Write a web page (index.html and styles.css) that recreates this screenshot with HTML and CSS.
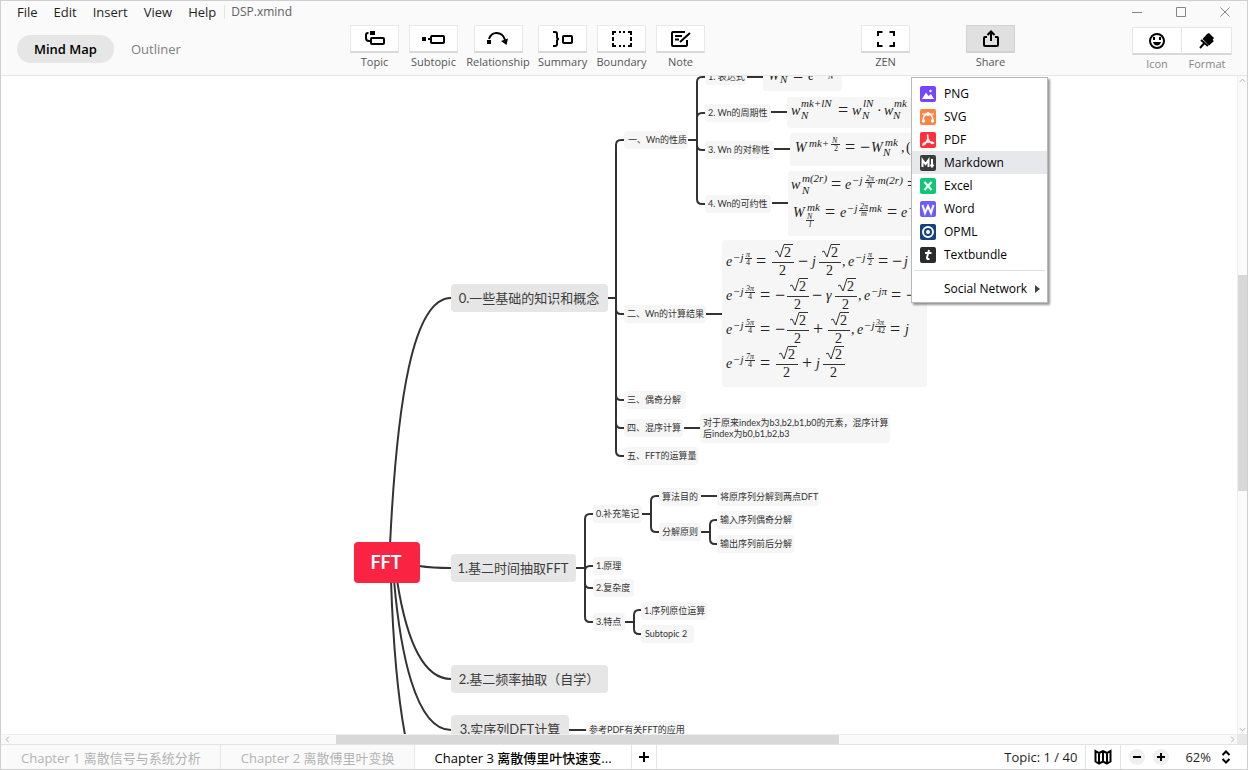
FILE: index.html
```html
<!DOCTYPE html>
<html lang="en">
<head>
<meta charset="utf-8">
<title>DSP.xmind</title>
<link rel="stylesheet" href="styles.css">
</head>
<body>
<div class="app">
  <header class="header">
    <div class="header-left">
      <nav class="menubar" aria-label="Main menu">
        <button class="menu">File</button>
        <button class="menu">Edit</button>
        <button class="menu">Insert</button>
        <button class="menu">View</button>
        <button class="menu">Help</button>
        <span class="filename">DSP.xmind</span>
      </nav>
      <div class="views">
        <button class="view view-active">Mind Map</button>
        <button class="view">Outliner</button>
      </div>
    </div>
    <div class="tools">
      <div class="tool">
        <button class="tool-button" aria-labelledby="l-topic"><svg width="22" height="18" viewBox="0 0 22 18"><path class="ln" d="M4.500 3H4Q2 3 2 5V8Q2 11 5 11H7"/><rect class="ln" x="7" y="8" width="13" height="6" rx="1"/><rect x="6" y="1" width="5" height="4"/></svg></button>
        <span class="tool-label" id="l-topic">Topic</span>
      </div>
      <div class="tool">
        <button class="tool-button" aria-labelledby="l-sub"><svg width="24" height="18" viewBox="0 0 24 18"><rect x="0" y="7" width="4" height="4"/><path class="ln" d="M6 9H9"/><rect class="ln" x="9" y="6" width="13" height="7" rx="1"/></svg></button>
        <span class="tool-label" id="l-sub">Subtopic</span>
      </div>
      <div class="tool tool-wide">
        <button class="tool-button" aria-labelledby="l-rel"><svg width="24" height="18" viewBox="0 0 24 18"><rect x="1" y="10" width="4" height="4"/><path class="ln" d="M3 9Q5 3 10.500 3Q17 3 19 10"/><path d="M15 11L22 8.500L20.500 15Z"/></svg></button>
        <span class="tool-label" id="l-rel">Relationship</span>
      </div>
      <div class="tool">
        <button class="tool-button" aria-labelledby="l-sum"><svg width="22" height="18" viewBox="0 0 22 18"><path class="ln" d="M1 2H3Q5 2 5 4V7Q5 9 7 9Q5 9 5 11V14Q5 16 3 16H1"/><rect class="ln" x="11" y="6" width="9" height="7" rx="1"/></svg></button>
        <span class="tool-label" id="l-sum">Summary</span>
      </div>
      <div class="tool">
        <button class="tool-button" aria-labelledby="l-bound"><svg width="22" height="18" viewBox="0 0 22 18"><path class="ln" d="M2 5V2H5M8 2H10M12 2H14M17 2H20V5M20 7V11M20 13V16H17M14 16H12M10 16H8M5 16H2V13M2 11V7"/></svg></button>
        <span class="tool-label" id="l-bound">Boundary</span>
      </div>
      <div class="tool">
        <button class="tool-button" aria-labelledby="l-note"><svg width="22" height="18" viewBox="0 0 22 18"><path class="ln" d="M15 2H3Q2 2 2 3V15Q2 16 3 16H16Q17 16 17 15V10M5 6H12M5 9.500H9M10 12L20 3"/></svg></button>
        <span class="tool-label" id="l-note">Note</span>
      </div>
      <div class="tool tool-zen">
        <button class="tool-button" aria-labelledby="l-zen"><svg width="22" height="18" viewBox="0 0 22 18"><path class="ln" d="M3 6V2H7.500M14.500 2H19V6M19 12V16H14.500M7.500 16H3V12"/></svg></button>
        <span class="tool-label" id="l-zen">ZEN</span>
      </div>
      <div class="tool tool-share">
        <button class="tool-button pressed" aria-labelledby="l-share" aria-expanded="true"><svg width="20" height="18" viewBox="0 0 20 18"><path class="ln" d="M6 7H4Q3 7 3 8V15Q3 16 4 16H16Q17 16 17 15V8Q17 7 16 7H14M10 11V2M6.500 5L10 1.500L13.500 5"/></svg></button>
        <span class="tool-label" id="l-share">Share</span>
        <div class="dropdown" role="menu">
          <button class="option" role="menuitem"><svg class="badge purple" viewBox="0 0 16 16"><path d="M2 13L6 6.500L8.500 10L11 8L14 13Z"/><circle cx="10.500" cy="5" r="1.200"/></svg>PNG</button>
          <button class="option" role="menuitem"><svg class="badge orange" viewBox="0 0 16 16"><path class="arc" d="M3 11.500Q3.500 5 8 5T13 11.500"/><path class="thin" d="M2 5H14"/><circle cx="8" cy="5" r="2"/><circle cx="3.500" cy="12" r="1.700"/><circle cx="12.500" cy="12" r="1.700"/></svg>SVG</button>
          <button class="option" role="menuitem"><svg class="badge red" viewBox="0 0 16 16"><path class="arc" d="M7.500 2.500Q8.500 7 7 9Q5 13 3 13Q2.500 11 7 10Q12 9 13.500 11Q12 12.500 9.500 9.500Q7 6 7.500 2.500Z"/></svg>PDF</button>
          <button class="option option-hover" role="menuitem"><svg class="badge dark" viewBox="0 0 16 16"><path class="mid" d="M2.500 12V5L5.500 9L8.500 5V12M12 4V11M10.500 9.500L12 11.500L13.500 9.500"/></svg>Markdown</button>
          <button class="option" role="menuitem"><svg class="badge green" viewBox="0 0 16 16"><path class="mid" d="M4.500 4L11.500 12M11.500 4L4.500 12"/></svg>Excel</button>
          <button class="option" role="menuitem"><svg class="badge violet" viewBox="0 0 16 16"><path class="mid" d="M2.500 4L5 12L8 5L11 12L13.500 4"/></svg>Word</button>
          <button class="option" role="menuitem"><svg class="badge navy" viewBox="0 0 16 16"><circle class="mid" cx="8" cy="8" r="5"/><circle cx="8" cy="8" r="2"/></svg>OPML</button>
          <button class="option" role="menuitem"><svg class="badge black" viewBox="0 0 16 16"><path class="mid" d="M9 3L7 10.500Q6.500 12.500 9.500 12M5 6H11.500"/></svg>Textbundle</button>
          <hr class="rule">
          <button class="option option-sub" role="menuitem">Social Network<svg class="more" viewBox="0 0 5 8"><path d="M0 0L5 4L0 8Z"/></svg></button>
        </div>
      </div>
    </div>
    <div class="header-right">
      <div class="window-controls">
        <button class="wc" aria-label="Minimize"><svg viewBox="0 0 12 12"><path d="M1 6.500H11"/></svg></button>
        <button class="wc" aria-label="Maximize"><svg viewBox="0 0 12 12"><path d="M1.500 1.500H10.500V10.500H1.500Z"/></svg></button>
        <button class="wc" aria-label="Close"><svg viewBox="0 0 12 12"><path d="M1.500 1.500L10.500 10.500M10.500 1.500L1.500 10.500"/></svg></button>
      </div>
      <div class="panels">
        <div class="panel">
          <button class="panel-button" aria-labelledby="l-icon"><svg width="18" height="18" viewBox="0 0 18 18"><circle class="ln" cx="9" cy="9" r="7"/><rect x="5" y="5" width="2" height="3"/><rect x="11" y="5" width="2" height="3"/><path d="M5 10H13Q12 13.500 9 13.500T5 10Z"/></svg></button>
          <span class="panel-label" id="l-icon">Icon</span>
        </div>
        <div class="panel">
          <button class="panel-button" aria-labelledby="l-format"><svg width="18" height="18" viewBox="0 0 18 18"><path d="M9 2L11 1L16 6L14.500 8L16 9L11 13.500L4.500 7Z"/><path class="ln" d="M3 8L10 14M6 11.500L2 16"/></svg></button>
          <span class="panel-label" id="l-format">Format</span>
        </div>
      </div>
    </div>
  </header>

  <main class="workspace">
    <svg class="canvas" role="img" aria-label="FFT mind map">
      <g transform="translate(-1 -76)">
        <g class="wire">
          <path d="M390 545C397 400 413 298 451 298"/>
          <path d="M419 566Q432 568 451 568"/>
          <path d="M397 580C404 625 418 679 451 679"/>
          <path d="M394 580C400 650 415 730 451 730"/>
          <path d="M391 580C393 640 398 700 406 740"/>
          <path d="M608 298H616M624 140H621Q616 140 616 145V451Q616 456 621 456H624M616 309Q616 314 621 314H624M616 395Q616 400 621 400H624M616 423Q616 428 621 428H624"/>
          <path d="M688 140H697M705 77H702Q697 77 697 82V199Q697 204 702 204H705M705 113H702Q697 113 697 118M697 145Q697 150 702 150H705"/>
          <path d="M747 77H763M771 112H787M774 149H790M772 203H788M706 314H722M684 428H700"/>
          <path d="M576 568H585M593 514H590Q585 514 585 519V617Q585 622 590 622H593M585 571Q585 566 590 566H593M585 583Q585 588 590 588H593"/>
          <path d="M642 514H651M659 496H656Q651 496 651 501V527Q651 532 656 532H659M701 496H717"/>
          <path d="M701 532H710M717 520H715Q710 520 710 525V539Q710 544 715 544H717"/>
          <path d="M625 622H634M641 610H639Q634 610 634 615V629Q634 634 639 634H641M569 730H586"/>
        </g>
        <g class="root"><rect x="354" y="542" width="66" height="41" rx="4"/><text x="386" y="569">FFT</text></g>
        <g class="main-topic">
          <rect x="451" y="284" width="157" height="28" rx="4"/><text x="529" y="303">0.一些基础的知识和概念</text>
          <rect x="451" y="554" width="125" height="28" rx="4"/><text x="513" y="573">1.基二时间抽取FFT</text>
          <rect x="451" y="665" width="157" height="28" rx="4"/><text x="529" y="684">2.基二频率抽取（自学）</text>
          <rect x="451" y="715" width="118" height="28" rx="4"/><text x="510" y="734">3.实序列DFT计算</text>
        </g>
        <g class="sub">
          <rect x="624" y="131" width="64" height="18" rx="3"/><text x="628" y="143">一、Wn的性质</text>
          <rect x="705" y="67" width="41" height="18" rx="3"/><text x="708" y="80">1. 表达式</text>
          <rect x="705" y="104" width="66" height="18" rx="3"/><text x="708" y="116">2. Wn的周期性</text>
          <rect x="705" y="141" width="69" height="18" rx="3"/><text x="708" y="153">3. Wn 的对称性</text>
          <rect x="705" y="195" width="66" height="18" rx="3"/><text x="708" y="207">4. Wn的可约性</text>
          <rect x="624" y="305" width="82" height="18" rx="3"/><text x="627" y="317">二、Wn的计算结果</text>
          <rect x="624" y="391" width="62" height="18" rx="3"/><text x="627" y="403">三、偶奇分解</text>
          <rect x="624" y="419" width="59" height="18" rx="3"/><text x="627" y="431">四、混序计算</text>
          <rect x="700" y="414" width="190" height="29" rx="3"/><text x="703" y="426">对于原来index为b3,b2,b1,b0的元素，混序计算</text><text x="703" y="437">后index为b0,b1,b2,b3</text>
          <rect x="624" y="447" width="74" height="18" rx="3"/><text x="627" y="459">五、FFT的运算量</text>
          <rect x="593" y="505" width="49" height="18" rx="3"/><text x="596" y="517">0.补充笔记</text>
          <rect x="659" y="488" width="42" height="18" rx="3"/><text x="662" y="500">算法目的</text>
          <rect x="717" y="488" width="102" height="18" rx="3"/><text x="720" y="500">将原序列分解到两点DFT</text>
          <rect x="659" y="523" width="42" height="18" rx="3"/><text x="662" y="535">分解原则</text>
          <rect x="717" y="511" width="77" height="18" rx="3"/><text x="720" y="523">输入序列偶奇分解</text>
          <rect x="717" y="535" width="77" height="18" rx="3"/><text x="720" y="547">输出序列前后分解</text>
          <rect x="593" y="557" width="30" height="18" rx="3"/><text x="596" y="569">1.原理</text>
          <rect x="593" y="579" width="41" height="18" rx="3"/><text x="596" y="591">2.复杂度</text>
          <rect x="593" y="613" width="32" height="18" rx="3"/><text x="596" y="625">3.特点</text>
          <rect x="641" y="602" width="66" height="18" rx="3"/><text x="644" y="614">1.序列原位运算</text>
          <rect x="641" y="625" width="53" height="18" rx="3"/><text x="645" y="637">Subtopic 2</text>
          <rect x="586" y="721" width="99" height="18" rx="3"/><text x="589" y="733">参考PDF有关FFT的应用</text>
          <rect x="763" y="60" width="79" height="31" rx="3"/>
          <rect x="787" y="97" width="150" height="31" rx="3"/>
          <rect x="790" y="133" width="150" height="33" rx="3"/>
          <rect x="788" y="171" width="150" height="65" rx="3"/>
          <rect x="722" y="240" width="205" height="147" rx="3"/>
        </g>
        <g class="math">
          <text x="768" y="80">W</text><text class="s" x="780" y="83">N</text><text class="o" x="793" y="82">=</text><text x="808" y="80">e</text><text class="t" x="828" y="79">N</text>

          <text x="791" y="115">w</text><text class="s" x="801" y="107">mk+lN</text><text class="s" x="801" y="119">N</text><text class="o" x="838" y="116">=</text>
          <text x="852" y="115">w</text><text class="s" x="863" y="107">lN</text><text class="s" x="862" y="119">N</text><text class="r" x="877" y="115">·</text><text x="884" y="115">w</text><text class="s" x="894" y="107">mk</text><text class="s" x="893" y="119">N</text>

          <text x="795" y="152">W</text><text class="s" x="809" y="147">mk+</text><text class="t" x="832" y="143">N</text><path d="M831 144.500H840"/><text class="t r" x="834" y="151">2</text><text class="o" x="845" y="153">=</text><text class="o" x="860" y="153">−</text><text x="871" y="152">W</text><text class="s" x="885" y="146">mk</text><text class="s" x="883" y="156">N</text><text class="r" x="901" y="152">,</text><text class="r" x="906" y="152">(</text>

          <text x="791" y="189">w</text><text class="s" x="802" y="182">m(2r)</text><text class="s" x="802" y="194">N</text><text class="o" x="831" y="190">=</text><text x="845" y="189">e</text><text class="s" x="852" y="184">−j</text><text class="t" x="866" y="181">2π</text><path d="M865 182.500H875"/><text class="t" x="867" y="188">N</text><text class="s" x="875" y="184">·m(2r)</text><text class="o" x="907" y="190">=</text>

          <text x="793" y="217">W</text><text class="s" x="807" y="211">mk</text><text class="t" x="807" y="219">N</text><path d="M806 220.500H814"/><text class="t" x="809" y="227">l</text><text class="o" x="825" y="218">=</text><text x="840" y="217">e</text><text class="s" x="847" y="212">−j</text><text class="t" x="860" y="209">2π</text><path d="M859 210.500H868"/><text class="t" x="861" y="216">m</text><text class="s" x="869" y="212">mk</text><text class="o" x="887" y="218">=</text><text x="901" y="217">e</text><text class="s" x="908" y="212">−</text>

          <text x="726" y="266">e</text><text class="s" x="733" y="261">−j</text><text class="t" x="746" y="257">π</text><path d="M745 258.500H752"/><text class="t r" x="746" y="265">4</text><text class="o" x="756" y="267">=</text>
          <g transform="translate(772 262)"><path d="M0 .5H22M3 -10L5 -11L8 -5L12 -17.500H21"/><text class="r" x="12" y="-5">2</text><text class="r" x="7" y="13">2</text></g>
          <text class="o" x="798" y="267">−</text><text x="812" y="266">j</text>
          <g transform="translate(819 262)"><path d="M0 .5H22M3 -10L5 -11L8 -5L12 -17.500H21"/><text class="r" x="12" y="-5">2</text><text class="r" x="7" y="13">2</text></g>
          <text class="r" x="842" y="266">,</text><text x="848" y="266">e</text><text class="s" x="855" y="261">−j</text><text class="t" x="868" y="257">π</text><path d="M867 258.500H874"/><text class="t r" x="868" y="265">2</text><text class="o" x="878" y="267">=</text><text class="o" x="892" y="267">−</text><text x="904" y="266">j</text>

          <text x="726" y="300">e</text><text class="s" x="733" y="295">−j</text><text class="t" x="746" y="291">3π</text><path d="M745 292.500H755"/><text class="t r" x="748" y="299">4</text><text class="o" x="760" y="301">=</text><text class="o" x="775" y="301">−</text>
          <g transform="translate(787 296)"><path d="M0 .5H22M3 -10L5 -11L8 -5L12 -17.500H21"/><text class="r" x="12" y="-5">2</text><text class="r" x="7" y="13">2</text></g>
          <text class="o" x="812" y="301">−</text><text x="826" y="300">γ</text>
          <g transform="translate(835 296)"><path d="M0 .5H22M3 -10L5 -11L8 -5L12 -17.500H21"/><text class="r" x="12" y="-5">2</text><text class="r" x="7" y="13">2</text></g>
          <text class="r" x="858" y="300">,</text><text x="864" y="300">e</text><text class="s" x="871" y="295">−jπ</text><text class="o" x="891" y="301">=</text><text class="o" x="906" y="301">−</text>

          <text x="726" y="334">e</text><text class="s" x="733" y="329">−j</text><text class="t" x="746" y="325">5π</text><path d="M745 326.500H755"/><text class="t r" x="748" y="333">4</text><text class="o" x="760" y="335">=</text><text class="o" x="775" y="335">−</text>
          <g transform="translate(787 330)"><path d="M0 .5H22M3 -10L5 -11L8 -5L12 -17.500H21"/><text class="r" x="12" y="-5">2</text><text class="r" x="7" y="13">2</text></g>
          <text class="o" x="813" y="335">+</text>
          <g transform="translate(828 330)"><path d="M0 .5H22M3 -10L5 -11L8 -5L12 -17.500H21"/><text class="r" x="12" y="-5">2</text><text class="r" x="7" y="13">2</text></g>
          <text class="r" x="851" y="334">,</text><text x="857" y="334">e</text><text class="s" x="864" y="329">−j</text><text class="t" x="876" y="325">3π</text><path d="M875 326.500H886"/><text class="t r" x="877" y="333">42</text><text class="o" x="890" y="335">=</text><text x="905" y="334">j</text>

          <text x="726" y="368">e</text><text class="s" x="733" y="363">−j</text><text class="t" x="746" y="359">7π</text><path d="M745 360.500H755"/><text class="t r" x="748" y="367">4</text><text class="o" x="760" y="369">=</text>
          <g transform="translate(776 364)"><path d="M0 .5H22M3 -10L5 -11L8 -5L12 -17.500H21"/><text class="r" x="12" y="-5">2</text><text class="r" x="7" y="13">2</text></g>
          <text class="o" x="802" y="369">+</text><text x="816" y="368">j</text>
          <g transform="translate(823 364)"><path d="M0 .5H22M3 -10L5 -11L8 -5L12 -17.500H21"/><text class="r" x="12" y="-5">2</text><text class="r" x="7" y="13">2</text></g>
        </g>
      </g>
    </svg>
    <div class="bar bar-v">
      <svg class="arrow" viewBox="0 0 10 10"><path d="M2 6.500L5 3.500L8 6.500"/></svg>
      <div class="gap-top"></div><div class="thumb thumb-v"></div><div class="gap-bottom"></div>
      <svg class="arrow" viewBox="0 0 10 10"><path d="M2 3.500L5 6.500L8 3.500"/></svg>
    </div>
    <div class="bar bar-h">
      <svg class="arrow arrow-first" viewBox="0 0 10 10"><path d="M6.500 2L3.500 5L6.500 8"/></svg>
      <div class="gap-left"></div><div class="thumb thumb-h"></div><div class="gap-right"></div>
      <svg class="arrow" viewBox="0 0 10 10"><path d="M3.500 2L6.500 5L3.500 8"/></svg>
    </div>
    <div class="corner"></div>
  </main>

  <footer class="footer">
    <button class="tab">Chapter 1 离散信号与系统分析</button>
    <button class="tab">Chapter 2 离散傅里叶变换</button>
    <button class="tab tab-active">Chapter 3 离散傅里叶快速变...</button>
    <button class="tab-add" aria-label="Add sheet"><svg width="12" height="12" viewBox="0 0 12 12"><path class="ln" d="M6 1V11M1 6H11"/></svg></button>
    <span class="count">Topic: 1 / 40</span>
    <button class="overview" aria-label="Overview"><svg width="18" height="16" viewBox="0 0 18 16"><path class="ln" d="M1.500 2L5 4L9 2L13 4L16.500 2V12.500L13 14.500L9 12.500L5 14.500L1.500 12.500ZM5 4V14M9 2V12M13 4V14"/></svg></button>
    <div class="zoom">
      <button class="round" aria-label="Zoom out"><svg width="8" height="8" viewBox="0 0 8 8"><path class="ln" d="M0 4H8"/></svg></button>
      <button class="round" aria-label="Zoom in"><svg width="8" height="8" viewBox="0 0 8 8"><path class="ln" d="M0 4H8M4 0V8"/></svg></button>
      <button class="percent">62%<svg width="10" height="14" viewBox="0 0 10 14"><path class="ln" d="M1.500 5L5 1.500L8.500 5M1.500 9L5 12.500L8.500 9"/></svg></button>
    </div>
  </footer>
</div>
</body>
</html>
```
FILE: styles.css
```css
* { box-sizing: border-box; }
body {
  margin: 0;
  font-family: "Open Sans", "Noto Sans", "Noto Sans CJK SC", sans-serif;
  font-size: 12px;
  color: #1f1f1f;
}
button {
  margin: 0;
  padding: 0;
  border: 0;
  background: none;
  font: inherit;
  color: inherit;
}
svg { display: block; flex: none; }
.ln { fill: none; stroke: #000; stroke-width: 2; }

.app {
  display: flex;
  flex-direction: column;
  height: 100vh;
  border: 1px solid #cfcfcf;
  overflow: hidden;
}

/* Header */
.header {
  display: flex;
  align-items: flex-start;
  flex: none;
  height: 75px;
  border-bottom: 1px solid #e6e6e6;
  background: #fafafa;
}
.header-left { width: 349px; padding-left: 16px; }
.menubar {
  display: flex;
  align-items: center;
  gap: 16px;
  height: 22px;
}
.menu { font-size: 13px; }
.filename {
  margin-left: -8px;
  padding-left: 6px;
  border-left: 1px solid #dfe8df;
  line-height: 14px;
  color: #606060;
}
.views { display: flex; align-items: center; margin-top: 12px; }
.view {
  height: 28px;
  padding: 0 17px;
  border-radius: 14px;
  font-size: 13px;
  color: #808080;
}
.view-active { background: #e6e6e6; color: #000; font-weight: 600; }

.tools { display: flex; gap: 10px; padding-top: 24px; }
.tool {
  position: relative;
  display: flex;
  flex-direction: column;
  align-items: center;
  width: 49px;
  white-space: nowrap;
}
.tool-wide { width: 60px; }
.tool-button {
  display: flex;
  align-items: center;
  justify-content: center;
  width: 49px;
  height: 28px;
  border: 1px solid #e8e8e8;
  border-bottom: 2px solid #d8d8d8;
  background: #fff;
}
.pressed { border-color: #d2d2d2; background: #e0e0e0; }
.tool-label, .panel-label {
  font-size: 11px;
  line-height: 14px;
  color: #555;
}
.tool-label { margin-top: 2px; }
.tool-zen { margin-left: 146px; }
.tool-share { margin-left: 46px; }

.dropdown {
  position: absolute;
  top: 52px;
  left: -55px;
  z-index: 2;
  width: 137px;
  padding: 4px 0 2px;
  border: 1px solid #b8b8b8;
  background: #fff;
  box-shadow: 2px 2px 2px rgba(0, 0, 0, .4);
}
.option {
  display: flex;
  align-items: center;
  gap: 8px;
  width: 100%;
  height: 23px;
  padding-left: 8px;
  color: #000;
}
.option-hover { background: #e7e8ec; }
.option-sub { padding-left: 32px; gap: 8px; }
.rule {
  margin: 4px 2px 6px;
  border: 0;
  border-top: 1px solid #e0e0e0;
}
.badge { width: 16px; height: 16px; border-radius: 2px; fill: #fff; }
.badge .thin, .badge .arc, .badge .mid { fill: none; stroke: #fff; stroke-width: 1; }
.badge .arc { stroke-width: 1.5; }
.badge .mid { stroke-width: 2; }
.purple { background: #7546ff; }
.orange { background: #ff8345; }
.red { background: #ff3037; }
.dark { background: #3b3b3b; }
.green { background: #12c677; }
.violet { background: #6b5cff; }
.navy { background: #15427c; }
.black { background: #2a2b2d; }
.more { width: 5px; height: 8px; fill: #444; }

.header-right {
  display: flex;
  flex-direction: column;
  align-items: flex-end;
  margin-left: auto;
  padding-right: 15px;
}
.window-controls {
  display: flex;
  align-items: center;
  gap: 32px;
  height: 22px;
  padding-right: 1px;
}
.wc svg { width: 12px; height: 12px; fill: none; stroke: #858585; }
.panels { display: flex; margin-top: 4px; }
.panel { display: flex; flex-direction: column; align-items: center; }
.panel-button {
  display: flex;
  align-items: center;
  justify-content: center;
  width: 50px;
  height: 28px;
  border: 1px solid #e6e6e6;
  border-bottom: 2px solid #d8d8d8;
  background: #fff;
}
.panel + .panel .panel-button { border-left: 0; }
.panel-label { margin-top: 2px; color: #858585; }

/* Mind map */
.workspace {
  display: grid;
  grid-template: minmax(0, 1fr) 10px / minmax(0, 1fr) 10px;
  flex: 1;
  min-height: 0;
}
.canvas { width: 100%; height: 100%; background: #fff; overflow: hidden; }
.wire { fill: none; stroke: #333; stroke-width: 2; }
.root rect { fill: #fa2341; }
.root text {
  font: bold 18px Lato, sans-serif;
  fill: #fff;
  text-anchor: middle;
}
.main-topic rect { fill: #e6e6e6; }
.main-topic text {
  font: 13px Lato, "Noto Sans CJK SC", sans-serif;
  fill: #3c3c3c;
  text-anchor: middle;
}
.sub rect { fill: #f6f6f6; }
.sub text { font: 9px Lato, "Noto Sans CJK SC", sans-serif; fill: #333; }
.math text { font: italic 14px "Liberation Serif", serif; fill: #222; }
.math .r { font-style: normal; }
.math .o { font-style: normal; font-size: 18px; }
.math .s { font-size: 11px; }
.math .t { font-size: 8px; }
.math path { fill: none; stroke: #333; stroke-width: 1; }

.bar { display: flex; background: #fafafa; }
.bar-v { flex-direction: column; border-left: 1px solid #eee; }
.bar-h { border-top: 1px solid #eee; }
.arrow { width: 9px; height: 9px; fill: none; stroke: #a8a8a8; }
.arrow-first { margin-left: 2px; }
.thumb { background: #d8d8d8; }
.gap-top { flex: 189; }
.thumb-v { flex: 216; }
.gap-bottom { flex: 233; }
.gap-left { flex: 324; }
.thumb-h { flex: 502; }
.gap-right { flex: 389; }
.corner { background: #e8e8e8; }

/* Footer */
.footer {
  display: flex;
  align-items: stretch;
  flex: none;
  height: 25px;
  border-top: 1px solid #e3e3e3;
  background: #fff;
  font-size: 13px;
}
.tab {
  padding: 0 19px 0 20px;
  border-right: 1px solid #e6e6e6;
  background: #fafafa;
  color: #b3b3b3;
  white-space: nowrap;
}
.tab-active { background: #fff; color: #000; font-weight: 500; }
.tab-add {
  display: flex;
  align-items: center;
  justify-content: center;
  width: 25px;
  border-right: 1px solid #e6e6e6;
}
.count { margin-left: auto; padding-right: 8px; line-height: 24px; }
.overview {
  display: flex;
  align-items: center;
  justify-content: center;
  width: 36px;
  border: solid #e3e3e3;
  border-width: 0 1px;
}
.zoom { display: flex; align-items: center; gap: 8px; padding: 0 16px 0 8px; }
.round {
  display: flex;
  align-items: center;
  justify-content: center;
  width: 16px;
  height: 16px;
  border-radius: 8px;
  background: #efefef;
}
.percent { display: flex; align-items: center; gap: 10px; margin-left: 8px; }
```
